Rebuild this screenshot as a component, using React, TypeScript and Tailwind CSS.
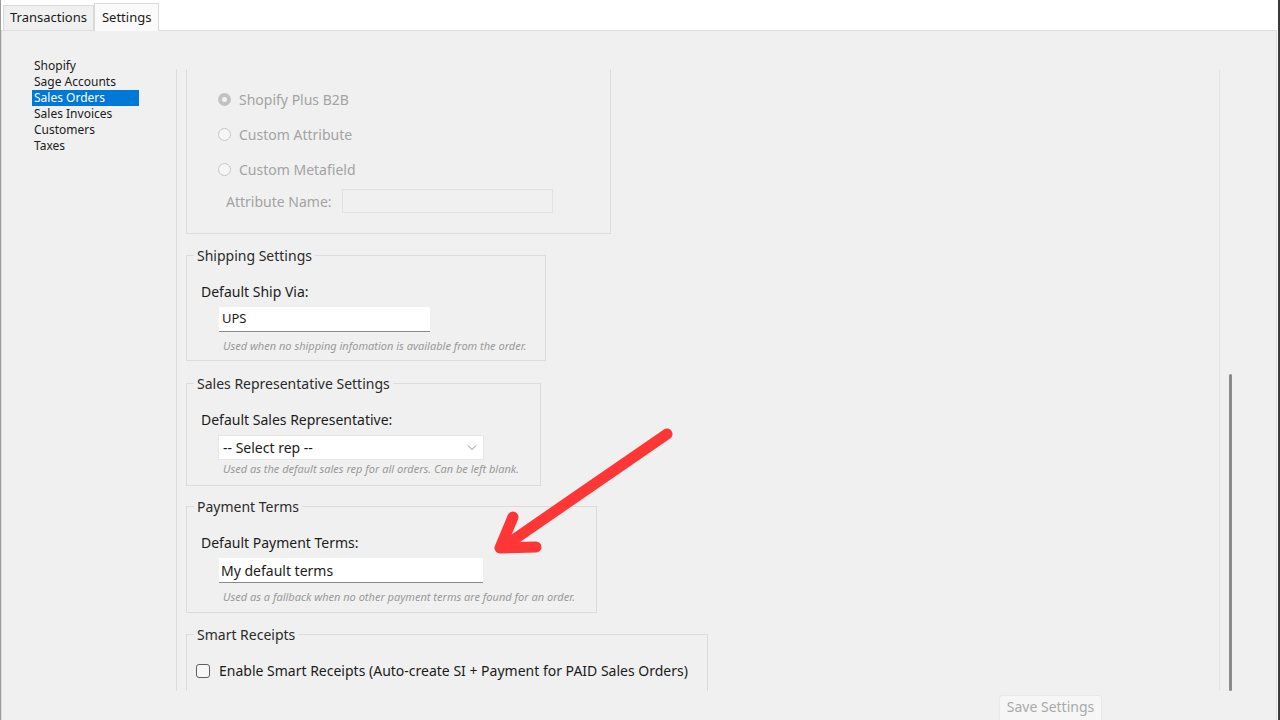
import React from 'react'

const navItems = ['Shopify', 'Sage Accounts', 'Sales Orders', 'Sales Invoices', 'Customers', 'Taxes']

function Radio({ checked, label }: { checked?: boolean; label: string }) {
    return (
        <div className="flex items-center h-[20px]">
            {checked ? (
                <span className="w-[13px] h-[13px] rounded-full bg-[#c2c2c2] flex items-center justify-center">
                    <span className="w-[5px] h-[5px] rounded-full bg-[#f2f2f2]" />
                </span>
            ) : (
                <span className="w-[13px] h-[13px] rounded-full border border-[#c6c6c6] bg-[#f6f6f6]" />
            )}
            <span className="ml-[8px] text-[#a3a3a3]">{label}</span>
        </div>
    )
}

function Group({ title, width, children }: { title?: string; width: string; children: React.ReactNode }) {
    return (
        <fieldset className={`border border-[#dcdcdc] ${width}`}>
            {title && <legend className="ml-[7px] px-[3px] leading-[19px] text-[#2b2b2b]">{title}</legend>}
            {children}
        </fieldset>
    )
}

function Help({ children }: { children: React.ReactNode }) {
    return <div className="pl-[36px] text-[11px] italic leading-[14px] text-[#999999]">{children}</div>
}

export default function App() {
    return (
        <div
            className="relative w-[1280px] h-[720px] overflow-hidden bg-white flex flex-col border-l border-[#9a9a9a] border-r-2 border-r-[#3a3a3a] text-[14px] text-[#1b1b1b]"
            style={{ fontFamily: '"Noto Sans", "Open Sans", sans-serif' }}
        >
            {/* tab strip */}
            <div className="h-[30px] flex items-end pl-[2px] shrink-0">
                <div className="h-[25px] px-[6px] flex items-center bg-[#f0f0f0] border border-[#d9d9d9] border-b-0 text-[13px]">
                    Transactions
                </div>
                <div className="h-[28px] px-[7px] flex items-center bg-[#fafafa] border border-[#d9d9d9] border-b-0 -mb-px text-[13px] z-10">
                    Settings
                </div>
            </div>

            {/* tab page */}
            <div className="flex-1 mr-[1px] bg-[#f0f0f0] border border-[#dedede] flex flex-col">
                <div className="flex items-start pt-[27px] h-[662px]">
                    <ul className="w-[174px] pl-[30px] text-[12px] leading-[16px] shrink-0">
                        {navItems.map((item) => (
                            <li
                                key={item}
                                className={
                                    item === 'Sales Orders'
                                        ? 'w-[107px] pl-[2px] bg-[#0078d7] text-white'
                                        : 'pl-[2px]'
                                }
                            >
                                {item}
                            </li>
                        ))}
                    </ul>

                    <div className="w-px h-[622px] mt-[11px] bg-[#dcdcdc] shrink-0" />

                    {/* scroll viewport */}
                    <div className="w-[1042px] h-[622px] mt-[11px] overflow-hidden shrink-0">
                        <div className="pl-[9px] -mt-[30px] flex flex-col">
                            <Group width="w-[425px]">
                                <div className="pt-[49px] pl-[31px] flex flex-col gap-[15px]">
                                    <Radio checked label="Shopify Plus B2B" />
                                    <Radio label="Custom Attribute" />
                                    <Radio label="Custom Metafield" />
                                </div>
                                <div className="flex items-center pl-[39px] mt-[10px] pb-[20px]">
                                    <span className="text-[#a3a3a3] w-[116px]">Attribute Name:</span>
                                    <div className="w-[211px] h-[24px] border border-[#e2e2e2] bg-[#f0f0f0]" />
                                </div>
                            </Group>

                            <div className="mt-[12px]">
                                <Group title="Shipping Settings" width="w-[360px]">
                                    <div className="pl-[14px] pt-[17px] leading-[19px]">Default Ship Via:</div>
                                    <div className="ml-[32px] mt-[6px] w-[211px] h-[25px] bg-white border-b border-[#8a8a8a] flex items-center pl-[3px] text-[13px]">
                                        UPS
                                    </div>
                                    <div className="mt-[7px] pb-[7px]">
                                        <Help>Used when no shipping infomation is available from the order.</Help>
                                    </div>
                                </Group>
                            </div>

                            <div className="mt-[13px]">
                                <Group title="Sales Representative Settings" width="w-[355px]">
                                    <div className="pl-[14px] pt-[17px] leading-[19px]">Default Sales Representative:</div>
                                    <div className="ml-[31px] mt-[6px] w-[266px] h-[25px] bg-white border border-[#e6e6e6] flex items-center justify-between pl-[4px] pr-[6px]">
                                        <span>-- Select rep --</span>
                                        <svg width="10" height="6" viewBox="0 0 10 6" fill="none" stroke="#8a8a8a" strokeWidth="1">
                                            <path d="M1 0.5 L5 4.5 L9 0.5" />
                                        </svg>
                                    </div>
                                    <div className="mt-[2px] pb-[9px]">
                                        <Help>Used as the default sales rep for all orders. Can be left blank.</Help>
                                    </div>
                                </Group>
                            </div>

                            <div className="mt-[11px]">
                                <Group title="Payment Terms" width="w-[411px]">
                                    <div className="pl-[14px] pt-[17px] leading-[19px]">Default Payment Terms:</div>
                                    <div className="ml-[32px] mt-[6px] w-[264px] h-[25px] bg-white border-b border-[#8a8a8a] flex items-center pl-[2px]">
                                        My default terms
                                    </div>
                                    <div className="mt-[7px] pb-[8px]">
                                        <Help>Used as a fallback when no other payment terms are found for an order.</Help>
                                    </div>
                                </Group>
                            </div>

                            <div className="mt-[12px]">
                                <Group title="Smart Receipts" width="w-[522px]">
                                    <div className="pl-[9px] pt-[16px] pb-[30px] flex items-center">
                                        <span className="w-[14px] h-[14px] rounded-[3px] border border-[#5f5f5f] bg-[#f7f7f7]" />
                                        <span className="ml-[9px]">Enable Smart Receipts (Auto-create SI + Payment for PAID Sales Orders)</span>
                                    </div>
                                </Group>
                            </div>
                        </div>
                    </div>

                    {/* scrollbar */}
                    <div className="flex h-[622px] mt-[11px] shrink-0">
                        <div className="w-px h-full bg-[#e2e2e2]" />
                        <div className="ml-[9px] w-[3px] h-full flex flex-col justify-end">
                            <div className="h-[317px] w-[3px] rounded-full bg-[#8a8a8a]" />
                        </div>
                    </div>
                </div>

                <div className="flex pl-[997px] pt-[2px]">
                    <div className="w-[103px] h-[30px] bg-[#f6f6f6] border border-[#e8e8e8] rounded-[3px] flex items-start justify-center pt-0 text-[#a9a9a9]">
                        Save Settings
                    </div>
                </div>
            </div>

            {/* annotation arrow */}
            <svg className="absolute left-0 top-0 pointer-events-none" width="1280" height="720">
                <g stroke="#ff3636" strokeWidth="11" strokeLinecap="round" strokeLinejoin="round" fill="none">
                    <path d="M666 434 L502 547" />
                    <path d="M512 517 L499 548 L535 547" />
                </g>
            </svg>
        </div>
    )
}
